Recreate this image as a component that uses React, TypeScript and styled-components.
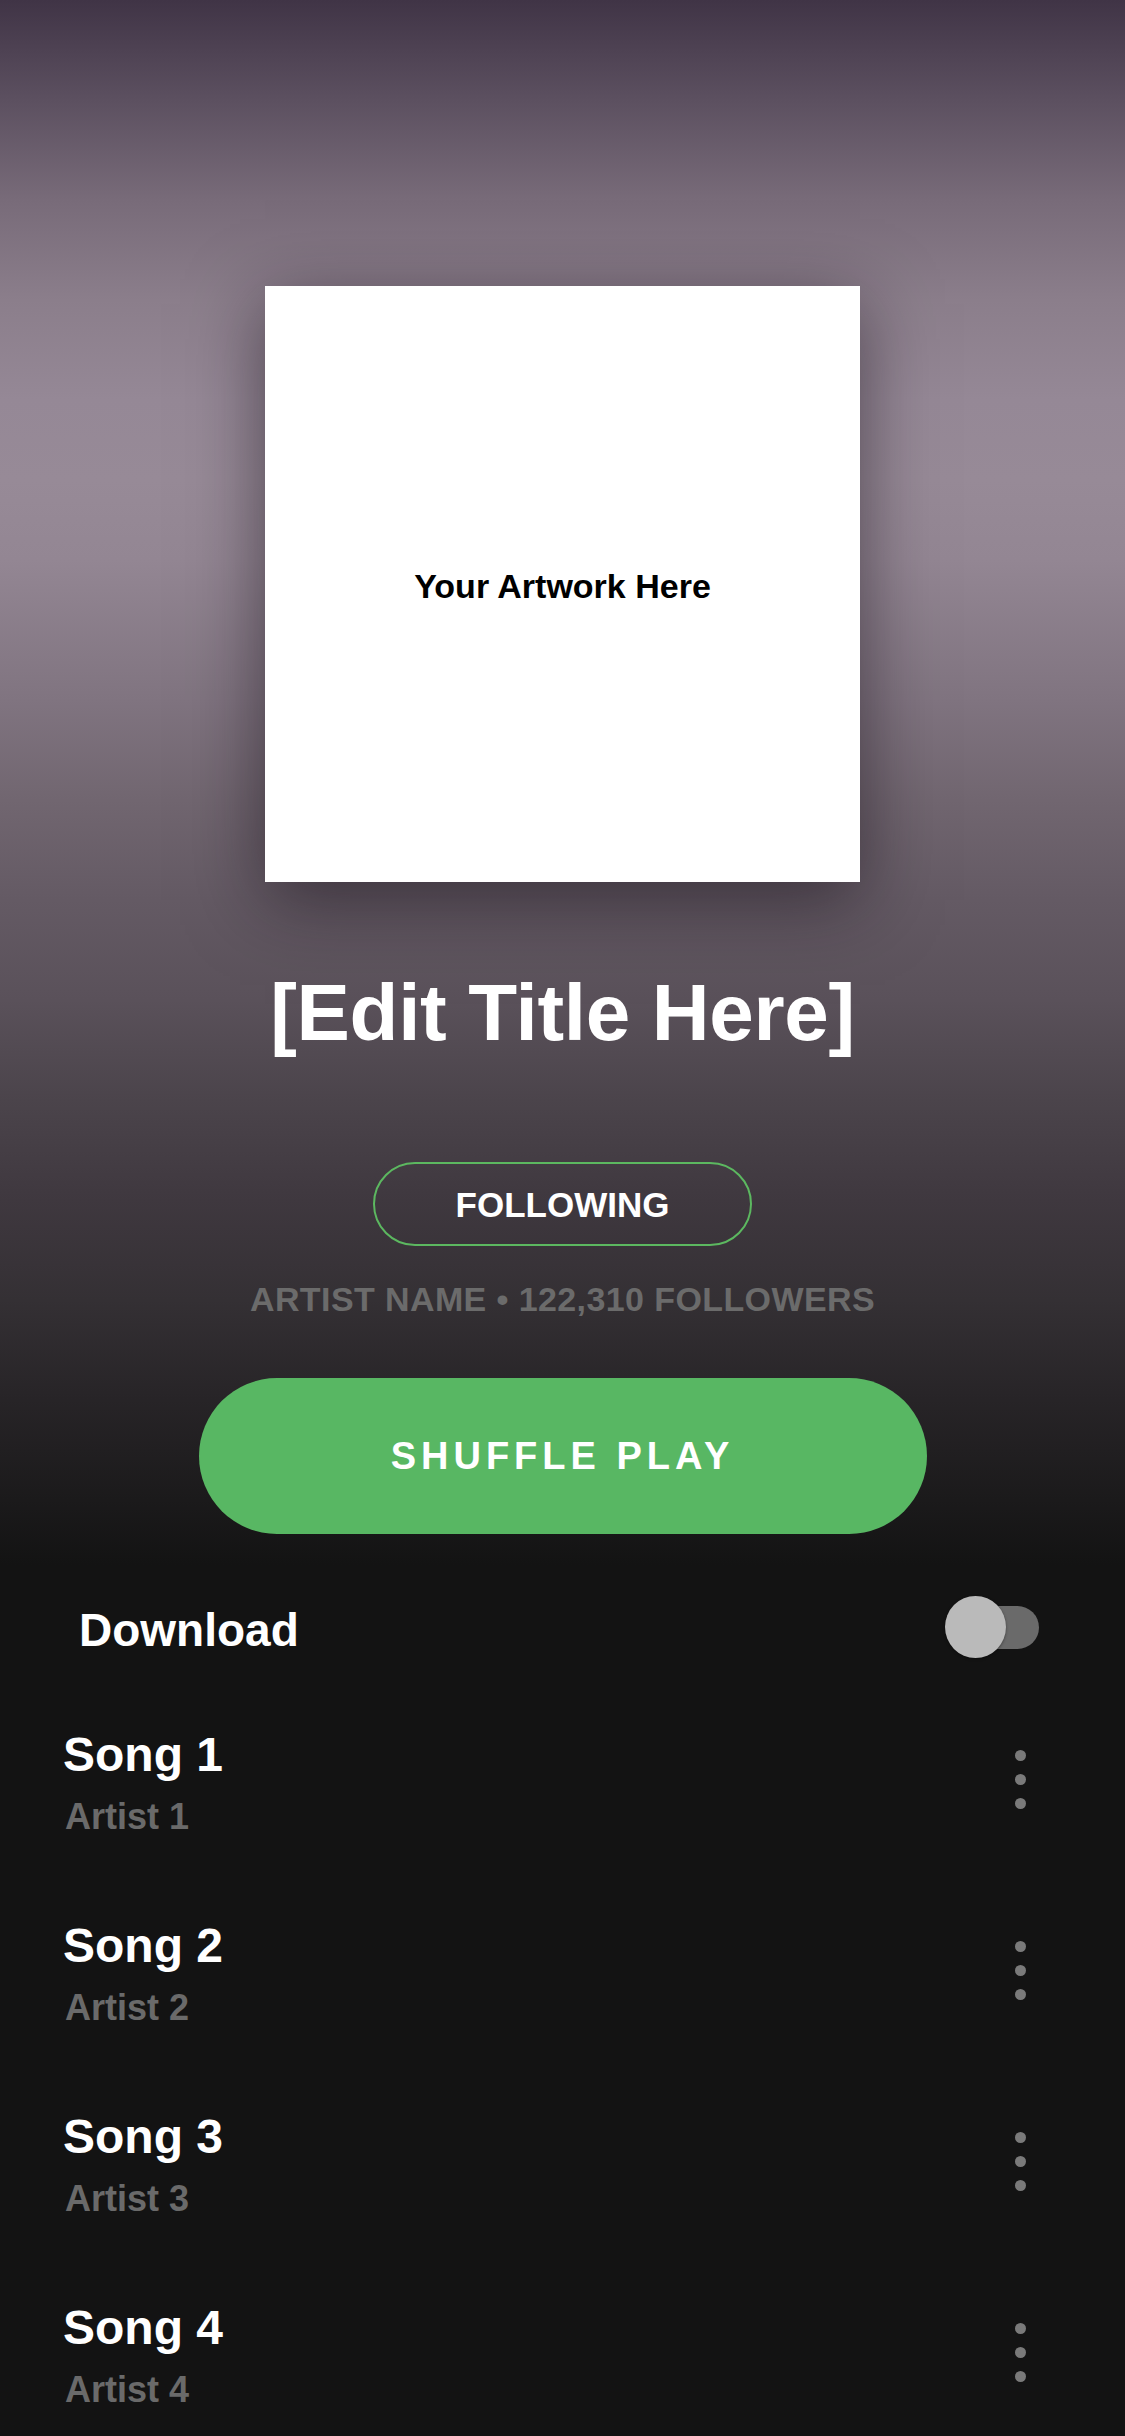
import React from "react";
import styled, { createGlobalStyle } from "styled-components";

const GlobalStyle = createGlobalStyle`
  html, body {
    margin: 0;
    padding: 0;
    background: #131313;
  }
  * { box-sizing: border-box; }
`;

const Page = styled.div`
  width: 1125px;
  min-height: 2436px;
  font-family: "Liberation Sans", Arial, Helvetica, sans-serif;
  background: linear-gradient(
    to bottom,
    #403446 0px,
    #5c5060 100px,
    #786b79 200px,
    #8b7e8b 300px,
    #958896 400px,
    #978a97 480px,
    #938693 560px,
    #807480 700px,
    #716670 800px,
    #645a64 900px,
    #5a515a 1000px,
    #4b444b 1100px,
    #3f383f 1200px,
    #343034 1300px,
    #272427 1400px,
    #1b1a1b 1500px,
    #131313 1565px,
    #131313 100%
  );
  display: flex;
  flex-direction: column;
`;

const Hero = styled.section`
  display: flex;
  flex-direction: column;
  align-items: center;
  padding-top: 286px;
`;

const Artwork = styled.div`
  width: 595px;
  height: 596px;
  background: #ffffff;
  display: flex;
  align-items: center;
  justify-content: center;
  box-shadow: 0 18px 70px rgba(20, 12, 22, 0.55);
`;

const ArtworkLabel = styled.span`
  font-size: 34px;
  font-weight: 700;
  color: #000;
  line-height: 1;
  margin-top: 4px;
`;

const Title = styled.h1`
  margin: 91px 0 0;
  font-size: 80px;
  line-height: 1;
  font-weight: 700;
  color: #ffffff;
  letter-spacing: -0.3px;
`;

const FollowButton = styled.button`
  margin-top: 109px;
  width: 379px;
  height: 84px;
  border: 2px solid #5cb860;
  border-radius: 42px;
  background: transparent;
  color: #ffffff;
  font-family: inherit;
  font-size: 35px;
  font-weight: 700;
  line-height: 1;
  display: flex;
  align-items: center;
  justify-content: center;
  padding: 0;
`;

const ArtistMeta = styled.p`
  margin: 36px 0 0;
  font-size: 34px;
  line-height: 1;
  font-weight: 700;
  color: #6b6b6b;
  letter-spacing: 0.4px;
`;

const ShuffleButton = styled.button`
  margin-top: 62px;
  width: 728px;
  height: 156px;
  border: none;
  border-radius: 78px;
  background: #58b763;
  color: #ffffff;
  font-family: inherit;
  font-size: 38px;
  font-weight: 700;
  letter-spacing: 5px;
  line-height: 1;
  display: flex;
  align-items: center;
  justify-content: center;
  padding: 0;
`;

const DownloadRow = styled.div`
  margin-top: 62px;
  height: 62px;
  display: flex;
  align-items: center;
  justify-content: space-between;
  padding: 0 86px 0 79px;
`;

const DownloadLabel = styled.span`
  font-size: 46px;
  font-weight: 700;
  color: #ffffff;
  line-height: 1;
  padding-top: 5px;
`;

const Toggle = styled.div`
  position: relative;
  width: 94px;
  height: 62px;
  display: flex;
  align-items: center;
  justify-content: flex-end;
`;

const ToggleTrack = styled.div`
  width: 80px;
  height: 43px;
  border-radius: 22px;
  background: #6a6a6a;
`;

const ToggleKnob = styled.div`
  position: absolute;
  left: 0;
  top: 0;
  width: 61px;
  height: 62px;
  border-radius: 50%;
  background: #bababa;
  box-shadow: 0 1px 3px rgba(0, 0, 0, 0.4);
`;

const SongList = styled.ul`
  list-style: none;
  margin: 73px 0 0;
  padding: 0;
  display: flex;
  flex-direction: column;
  gap: 87px;
`;

const SongRow = styled.li`
  height: 104px;
  display: flex;
  align-items: center;
  justify-content: space-between;
  padding: 0 99px 0 63px;
`;

const SongText = styled.div`
  display: flex;
  flex-direction: column;
  gap: 20px;
`;

const SongTitle = styled.span`
  font-size: 48px;
  font-weight: 700;
  line-height: 1;
  color: #ffffff;
`;

const SongArtist = styled.span`
  font-size: 36px;
  font-weight: 700;
  line-height: 1;
  color: #6a6a6a;
  padding-left: 2px;
`;

const MoreButton = styled.div`
  display: flex;
  flex-direction: column;
  gap: 13px;
  margin-bottom: 8px;
`;

const Dot = styled.span`
  width: 11px;
  height: 11px;
  border-radius: 50%;
  background: #7a7a7a;
`;

const songs = [
  { title: "Song 1", artist: "Artist 1" },
  { title: "Song 2", artist: "Artist 2" },
  { title: "Song 3", artist: "Artist 3" },
  { title: "Song 4", artist: "Artist 4" },
];

export default function App() {
  return (
    <>
      <GlobalStyle />
      <Page>
        <Hero>
          <Artwork>
            <ArtworkLabel>Your Artwork Here</ArtworkLabel>
          </Artwork>
          <Title>[Edit Title Here]</Title>
          <FollowButton>FOLLOWING</FollowButton>
          <ArtistMeta>ARTIST NAME • 122,310 FOLLOWERS</ArtistMeta>
          <ShuffleButton>SHUFFLE PLAY</ShuffleButton>
        </Hero>
        <DownloadRow>
          <DownloadLabel>Download</DownloadLabel>
          <Toggle>
            <ToggleTrack />
            <ToggleKnob />
          </Toggle>
        </DownloadRow>
        <SongList>
          {songs.map((s) => (
            <SongRow key={s.title}>
              <SongText>
                <SongTitle>{s.title}</SongTitle>
                <SongArtist>{s.artist}</SongArtist>
              </SongText>
              <MoreButton>
                <Dot />
                <Dot />
                <Dot />
              </MoreButton>
            </SongRow>
          ))}
        </SongList>
      </Page>
    </>
  );
}
